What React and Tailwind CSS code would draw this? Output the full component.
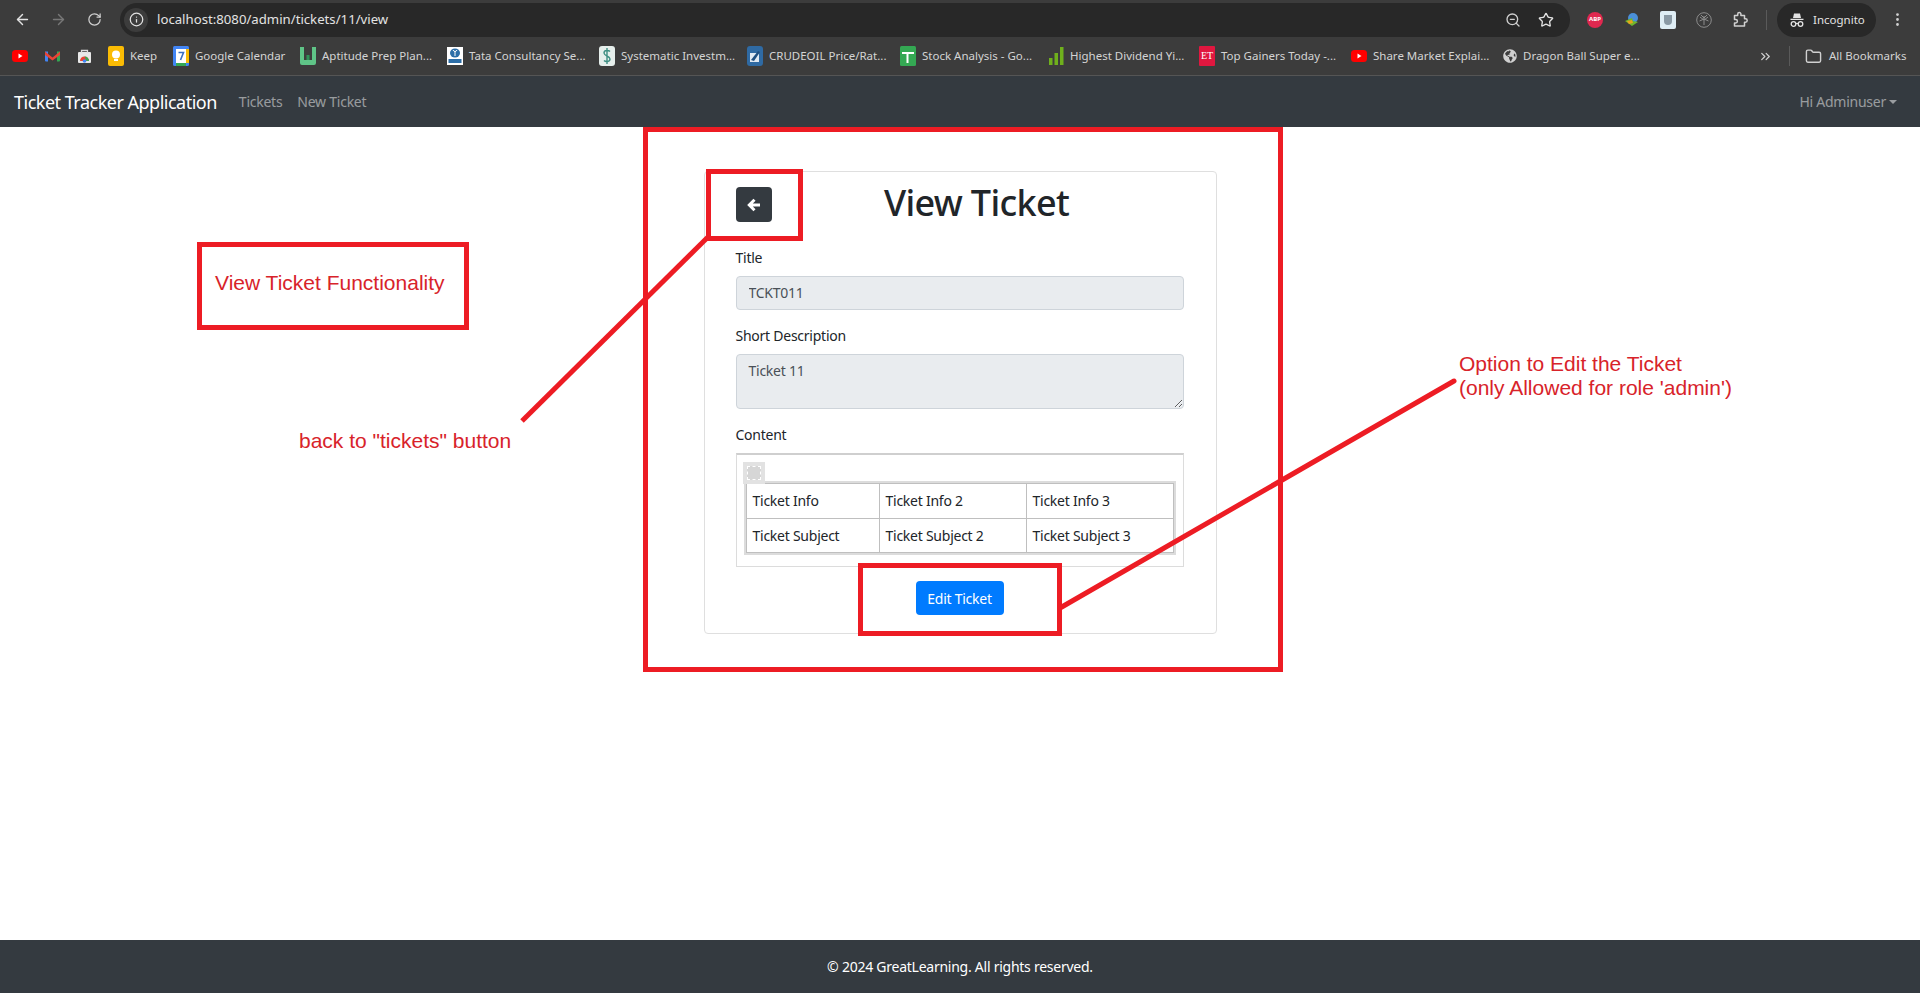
import { ArrowLeft, ArrowRight, RotateCw, Info, ZoomOut, Star, EllipsisVertical, Folder, ChevronsRight } from "lucide-react";
import { FaGlobeAmericas } from "react-icons/fa";

const Youtube = () => (
  <svg width="16" height="16" viewBox="0 0 16 16">
    <rect x="0" y="2" width="16" height="12" rx="3.5" fill="#ff0000" />
    <path d="M6.5 5.5v5l4-2.5z" fill="#fff" />
  </svg>
);

const Gmail = () => (
  <svg width="15" height="16" viewBox="0 0 15 16">
    <path d="M0 3.5h3v10H1a1 1 0 0 1-1-1z" fill="#4285f4" />
    <path d="M12 3.5h3v9a1 1 0 0 1-1 1h-2z" fill="#34a853" />
    <path d="M0 3.5l7.5 6 7.5-6v3.5l-7.5 5.5L0 7z" fill="#ea4335" />
  </svg>
);

const Store = () => (
  <svg width="15" height="16" viewBox="0 0 15 16">
    <rect x="1" y="4" width="13" height="11" rx="1" fill="#e8e8e8" />
    <path d="M4.5 5V2.5h6V5" fill="none" stroke="#ddd" strokeWidth="1.3" />
    <path d="M3 13a4.5 4.5 0 0 1 9 0z" fill="#ea4335" />
    <path d="M7.5 8.5a4.5 4.5 0 0 1 4.5 4.5H9.5z" fill="#34a853" />
    <circle cx="7.5" cy="13" r="1.8" fill="#4285f4" />
  </svg>
);

const Keep = () => (
  <svg width="16" height="20" viewBox="0 0 16 20">
    <rect width="16" height="20" rx="2" fill="#fbbc04" />
    <circle cx="8" cy="8.5" r="4" fill="#fff" />
    <rect x="6" y="13" width="4" height="2" fill="#fff" />
  </svg>
);

const Calendar = () => (
  <svg width="16" height="20" viewBox="0 0 16 20">
    <rect width="16" height="20" rx="1.5" fill="#4285f4" />
    <rect x="3" y="3" width="10" height="14" fill="#fff" />
    <rect x="13" y="3" width="3" height="14" fill="#fbbc04" />
    <rect x="3" y="17" width="10" height="3" fill="#34a853" />
    <path d="M5.5 6.5h5L7.5 14" fill="none" stroke="#3b6fc4" strokeWidth="1.6" />
  </svg>
);

const Aptitude = () => (
  <svg width="16" height="20" viewBox="0 0 16 20">
    <path d="M0 1h4v13h8V1h4v16a2 2 0 0 1-2 2H2a2 2 0 0 1-2-2z" fill="#5fc487" />
    <rect x="6.5" y="9" width="3" height="5" fill="#2f8f57" />
  </svg>
);

const Tata = () => (
  <svg width="16" height="18" viewBox="0 0 16 18">
    <rect width="16" height="18" fill="#fff" />
    <ellipse cx="8" cy="6" rx="5" ry="4.5" fill="#2c6ea8" />
    <path d="M6 3c1 2 3 2 4 0M8 4v5" stroke="#fff" strokeWidth="1" fill="none" />
    <rect x="1.5" y="12" width="13" height="4" fill="#2c6ea8" />
  </svg>
);

const Systematic = () => (
  <svg width="16" height="20" viewBox="0 0 16 20">
    <rect width="16" height="20" rx="3" fill="#e6efec" />
    <path d="M11 5.5C9.5 4 5 4 5 7s6 3 6 6-4.5 3-6 1.5M8 2v16" fill="none" stroke="#3f8f83" strokeWidth="1.4" />
  </svg>
);

const Crude = () => (
  <svg width="16" height="20" viewBox="0 0 16 20">
    <rect width="16" height="20" rx="3" fill="#2f6aa3" />
    <rect x="3" y="7" width="9" height="9" fill="#dfe9f3" />
    <path d="M4 14l7-9 2 1-6 9z" fill="#1f4f80" />
  </svg>
);

const Sheets = () => (
  <svg width="16" height="20" viewBox="0 0 16 20">
    <rect width="16" height="20" rx="1.5" fill="#34a853" />
    <path d="M2 7h12M7.5 7v10" stroke="#fff" strokeWidth="2" />
  </svg>
);

const Bars = () => (
  <svg width="15" height="20" viewBox="0 0 15 20">
    <rect x="0" y="12" width="3.5" height="7" fill="#6fb01c" />
    <rect x="5.5" y="7" width="3.5" height="12" fill="#6fb01c" />
    <rect x="11" y="1" width="3.5" height="18" fill="#6fb01c" />
  </svg>
);

const Et = () => (
  <div className="flex h-5 w-4 items-center justify-center rounded-[1px] bg-[#e0173f] font-['Liberation_Serif',serif] text-[10px] leading-none text-white">
    ET
  </div>
);

const Bookmark = ({ icon, label, className }) => (
  <div className={`flex shrink-0 items-center gap-[6px] ${className}`}>
    {icon}
    <span className="whitespace-nowrap">{label}</span>
  </div>
);

const Annotations = () => (
  <>
    <svg className="pointer-events-none absolute left-0 top-0" width="1920" height="993">
      <line x1="522" y1="421" x2="708" y2="237" stroke="#ed1c24" strokeWidth="5" />
      <line x1="1060" y1="608" x2="1454" y2="381" stroke="#ed1c24" strokeWidth="5" strokeLinecap="round" />
    </svg>
    <div className="pointer-events-none absolute left-[643px] top-[127px] h-[545px] w-[640px] border-[5px] border-[#ed1c24]" />
    <div className="pointer-events-none absolute left-[706px] top-[169px] h-[72px] w-[97px] border-[5px] border-[#ed1c24]" />
    <div className="pointer-events-none absolute left-[858px] top-[563px] h-[73px] w-[204px] border-[5px] border-[#ed1c24]" />
    <div className="absolute left-[197px] top-[242px] flex h-[88px] w-[272px] items-center border-[5px] border-[#ed1c24] pb-[6px] pl-[13px] font-['Liberation_Sans',sans-serif] text-[21px] text-[#d8232a]">
      View Ticket Functionality
    </div>
    <div className="absolute left-[299px] top-[429px] font-['Liberation_Sans',sans-serif] text-[21px] leading-6 text-[#d8232a]">
      back to "tickets" button
    </div>
    <div className="absolute left-[1459px] top-[352px] font-['Liberation_Sans',sans-serif] text-[21px] leading-6 text-[#d8232a]">
      Option to Edit the Ticket
      <br />
      (only Allowed for role 'admin')
    </div>
  </>
);

export default function App() {
  return (
    <div className="relative flex min-h-screen flex-col overflow-hidden bg-white font-['Noto_Sans',sans-serif] text-[14px] text-[#212529]">
      {/* browser chrome */}
      <div className="flex h-[38px] items-center bg-[#3c3c3c] pt-[1px] text-[#c7c7c7]">
        <ArrowLeft size={17} className="ml-[14px] text-[#e3e3e3]" />
        <ArrowRight size={17} className="ml-[19px] text-[#777]" />
        <RotateCw size={15} className="ml-[20px] text-[#d0d0d0]" />
        <div className="ml-[18px] flex h-[34px] w-[1450px] items-center rounded-full bg-[#282828] pl-1">
          <div className="flex h-6 w-6 items-center justify-center rounded-full bg-[#3c3c3c]">
            <Info size={15} className="text-[#e3e3e3]" />
          </div>
          <span className="ml-[9px] text-[13.2px] text-[#e3e3e3]">localhost:8080/admin/tickets/11/view</span>
          <ZoomOut size={16} className="ml-auto text-[#d0d0d0]" />
          <Star size={16} className="ml-[17px] mr-[16px] text-[#e3e3e3]" />
        </div>
        <div className="ml-[17px] flex h-4 w-4 items-center justify-center rounded-full bg-[#e0284f] text-[6px] font-bold text-white">
          ABP
        </div>
        <svg className="ml-[21px]" width="16" height="16" viewBox="0 0 16 16">
          <circle cx="9" cy="6" r="5" fill="#4a8fd8" />
          <path d="M1 9l7-3 1 3 5 1-6 4z" fill="#6fb52c" />
          <path d="M3 9l5-1 1 3-4 1z" fill="#e8a21c" />
        </svg>
        <div className="ml-[20px] flex h-[18px] w-4 items-center justify-center rounded-[2px] bg-[#dfeef5]">
          <div className="h-[10px] w-2 rounded-b-[4px] bg-[#8a9aa5]" />
        </div>
        <svg className="ml-[20px]" width="16" height="16" viewBox="0 0 16 16" fill="none" stroke="#8c8c8c">
          <circle cx="8" cy="8" r="7.3" />
          <path d="M8 4v9M4 5l4 3 4-3M3.5 9L8 7l4.500 2M5 3l3 3 3-3" strokeWidth="1" />
        </svg>
        <svg className="ml-[20px]" width="17" height="17" viewBox="0 0 17 17" fill="none" stroke="#d0d0d0" strokeWidth="1.5" strokeLinejoin="round">
          <path d="M2.5 4.5h3.2V3.2a1.6 1.600 0 0 1 3.200 0v1.300h3.600v3.300h1a1.700 1.700 0 0 1 0 3.400h-1v3.800H2.500v-3h1.200a1.700 1.700 0 0 0 0-3.400H2.500z" />
        </svg>
        <div className="ml-[17px] h-5 w-px bg-[#5a5a5a]" />
        <div className="ml-[10px] flex h-[34px] w-[99px] items-center rounded-full bg-[#282828] pl-[12px] text-[#e3e3e3]">
          <svg width="16" height="16" viewBox="0 0 16 16" fill="#e3e3e3">
            <path d="M5 1.500h6l1 4.500H4zM1.500 6.800h13v1.200h-13z" />
            <circle cx="4.500" cy="12" r="2.300" fill="none" stroke="#e3e3e3" strokeWidth="1.300" />
            <circle cx="11.500" cy="12" r="2.300" fill="none" stroke="#e3e3e3" strokeWidth="1.300" />
            <path d="M6.800 11.500h2.400" stroke="#e3e3e3" strokeWidth="1.200" />
          </svg>
          <span className="ml-[8px] text-[11.5px]">Incognito</span>
        </div>
        <EllipsisVertical size={17} className="ml-[13px] text-[#d0d0d0]" />
      </div>

      {/* bookmarks */}
      <div className="flex h-[38px] items-center border-b border-[#555] bg-[#3c3c3c] pb-[1px] pl-[12px] text-[11.5px] text-[#d4d4d4]">
        <div className="w-[33px] shrink-0"><Youtube /></div>
        <div className="w-[32px] shrink-0"><Gmail /></div>
        <div className="w-[31px] shrink-0"><Store /></div>
        <Bookmark className="w-[65px]" icon={<Keep />} label="Keep" />
        <Bookmark className="w-[127px]" icon={<Calendar />} label="Google Calendar" />
        <Bookmark className="w-[147px]" icon={<Aptitude />} label="Aptitude Prep Plan..." />
        <Bookmark className="w-[152px]" icon={<Tata />} label="Tata Consultancy Se..." />
        <Bookmark className="w-[148px]" icon={<Systematic />} label="Systematic Investm..." />
        <Bookmark className="w-[153px]" icon={<Crude />} label="CRUDEOIL Price/Rat..." />
        <Bookmark className="w-[149px]" icon={<Sheets />} label="Stock Analysis - Go..." />
        <Bookmark className="w-[150px]" icon={<Bars />} label="Highest Dividend Yi..." />
        <Bookmark className="w-[152px]" icon={<Et />} label="Top Gainers Today -..." />
        <Bookmark className="w-[152px]" icon={<Youtube />} label="Share Market Explai..." />
        <Bookmark className="w-[255px]" icon={<FaGlobeAmericas size={14} className="text-[#d0d0d0]" />} label="Dragon Ball Super e..." />
        <ChevronsRight size={15} className="text-[#d0d0d0]" />
        <div className="ml-[16px] h-5 w-px bg-[#5a5a5a]" />
        <Folder size={17} className="ml-[15px] text-[#d0d0d0]" />
        <span className="ml-[7px] whitespace-nowrap">All Bookmarks</span>
      </div>

      {/* navbar */}
      <nav className="flex h-[51px] items-center bg-[#343a40] pl-[14px] pr-[23px] tracking-[-0.25px]">
        <span className="mt-[1px] text-[18px] tracking-[-0.5px] text-white">Ticket Tracker Application</span>
        <a className="ml-[22px] text-white/50">Tickets</a>
        <a className="ml-[15px] text-white/50">New Ticket</a>
        <a className="ml-auto flex items-center text-white/50">
          Hi Adminuser
          <span className="ml-[3px] h-0 w-0 border-x-[4px] border-t-[4px] border-x-transparent border-t-white/50" />
        </a>
      </nav>

      {/* page */}
      <main className="flex-1 pt-[44px] tracking-[-0.25px]">
        <div className="mx-auto w-[513px] rounded border border-[#dfdfdf] bg-white px-[31px] pb-[18px] pt-[15px]">
          <div className="flex h-[61px] items-start">
            <button className="flex h-[35px] w-9 items-center justify-center rounded-[4px] bg-[#343a40] text-white">
              <svg width="14" height="14" viewBox="0 0 14 14" fill="none" stroke="#fff" strokeWidth="3">
                <path d="M7.500 1.800L2.300 7l5.200 5.200M3 7h10" />
              </svg>
            </button>
            <h1 className="flex-1 pr-[3px] text-center text-[36px] font-medium leading-[31px] tracking-[-0.66px]">View Ticket</h1>
          </div>

          <label className="mb-[8px] block leading-[20px]">Title</label>
          <input
            disabled
            value="TCKT011"
            className="block h-[34px] w-[448px] rounded border border-[#ced4da] bg-[#e9ecef] px-3 pb-[2px] text-[#495057]"
          />

          <label className="mb-[8px] mt-4 block leading-[20px]">Short Description</label>
          <textarea
            disabled
            value="Ticket 11"
            className="block h-[55px] w-[448px] rounded border border-[#ced4da] bg-[#e9ecef] px-3 py-[5px] text-[#495057]"
          />

          <label className="mb-[8px] mt-4 block leading-[20px]">Content</label>
          <div className="relative h-[114px] w-[448px] border border-t-2 border-[#dcdcdc] border-t-[#cfcfcf] pl-[9px] pt-[28px]">
            <div className="absolute left-[6px] top-[7px] flex h-[22px] w-[22px] items-center justify-center bg-[#e2e2e2]">
              <div className="h-[14px] w-[14px] border border-dashed border-white bg-[#d6d6d6]" />
            </div>
            <table className="w-[428px] table-fixed border-collapse outline-2 outline-[#dcdcdc]">
              <tbody>
                <tr className="h-[35px]">
                  <td className="w-[133px] border border-[#bfbfbf] pb-[1px] pl-[6px]">Ticket Info</td>
                  <td className="w-[147px] border border-[#bfbfbf] pb-[1px] pl-[6px]">Ticket Info 2</td>
                  <td className="border border-[#bfbfbf] pb-[1px] pl-[6px]">Ticket Info 3</td>
                </tr>
                <tr className="h-[34px]">
                  <td className="border border-[#bfbfbf] pb-[1px] pl-[6px]">Ticket Subject</td>
                  <td className="border border-[#bfbfbf] pb-[1px] pl-[6px]">Ticket Subject 2</td>
                  <td className="border border-[#bfbfbf] pb-[1px] pl-[6px]">Ticket Subject 3</td>
                </tr>
              </tbody>
            </table>
          </div>

          <div className="mt-[14px] flex w-[448px] justify-center">
            <button className="h-[34px] w-[88px] rounded bg-[#007bff] text-white">Edit Ticket</button>
          </div>
        </div>
      </main>

      <footer className="flex h-[53px] items-center justify-center bg-[#343a40] tracking-[-0.25px] text-white">
        © 2024 GreatLearning. All rights reserved.
      </footer>

      <Annotations />
    </div>
  );
}
